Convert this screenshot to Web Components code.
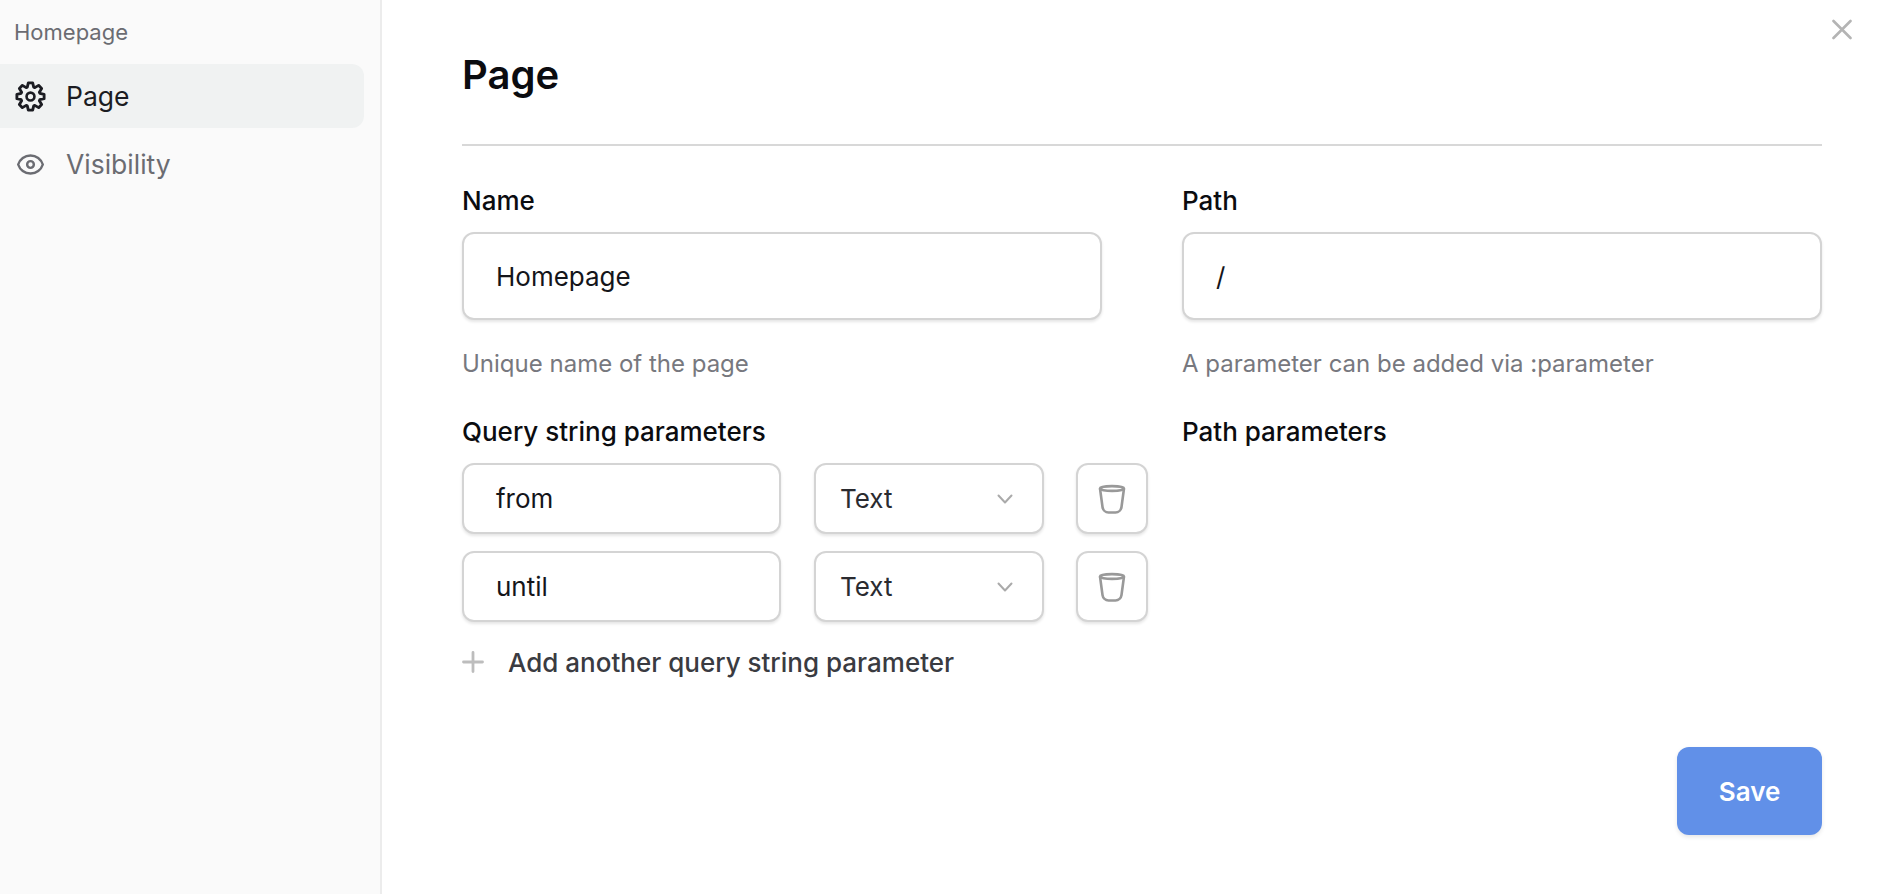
<!DOCTYPE html>
<html lang="en">
<head>
<meta charset="utf-8">
<title>Page settings</title>
<style>
  html, body { margin: 0; height: 100%; }
  body { font-family: Inter, "Liberation Sans", sans-serif; color: #0b0c10; background: #fff; overflow: hidden; }
</style>
</head>
<body>
<settings-dialog>
  <side-nav slot="nav" heading="Homepage">
    <nav-item active label="Page">
      <svg slot="icon" width="35" height="35" viewBox="-16 -16 32 32" fill="none" stroke="currentColor" stroke-width="2.6" stroke-linejoin="round" style="margin-left:1px"><path id="gear"/><circle r="3.6" stroke-width="2.4"/></svg>
    </nav-item>
    <nav-item label="Visibility">
      <svg slot="icon" width="31" height="31" viewBox="0 0 24 24" fill="none" stroke="currentColor" stroke-width="1.9" stroke-linecap="round" stroke-linejoin="round"><path d="M2.458 12C3.732 7.943 7.523 5 12 5c4.478 0 8.268 2.943 9.542 7-1.274 4.057-5.064 7-9.542 7-4.477 0-8.268-2.943-9.542-7z"/><circle cx="12" cy="12" r="2.6"/></svg>
    </nav-item>
  </side-nav>

  <page-form title-text="Page">
    <form-field label="Name" help="Unique name of the page"><text-input value="Homepage"></text-input></form-field>
    <form-field label="Path" help="A parameter can be added via :parameter"><text-input value="/"></text-input></form-field>
    <param-list label="Query string parameters" add-label="Add another query string parameter">
      <param-row name="from" type="Text"></param-row>
      <param-row name="until" type="Text"></param-row>
    </param-list>
    <param-list label="Path parameters"></param-list>
  </page-form>
</settings-dialog>

<script>
// small helper so every element gets an open shadow root from a string
const shadow = (el, html) => { el.attachShadow({mode: 'open'}).innerHTML = html; };

// eight-tooth cog outline, a tooth pointing straight up
const gear = [];
for (let k = 0; k < 8; k++) {
  const a = k * 45;
  for (const [deg, r] of [[-19, 9], [-9, 12.6], [9, 12.6], [19, 9]]) {
    const t = (a + deg - 90) * Math.PI / 180;
    gear.push((r * Math.cos(t)).toFixed(2) + ' ' + (r * Math.sin(t)).toFixed(2));
  }
}
document.getElementById('gear').setAttribute('d', 'M' + gear.join('L') + 'Z');

customElements.define('settings-dialog', class extends HTMLElement {
  constructor() {
    super();
    shadow(this, `
      <style>
        :host { display: flex; height: 894px; position: relative; }
        button { position: absolute; top: 19px; right: 38px; width: 20px; height: 21px; padding: 0; border: 0; background: none; color: #b4b4b4; }
        svg { display: block; }
      </style>
      <slot name="nav"></slot>
      <slot></slot>
      <button aria-label="Close"><svg width="20" height="21" viewBox="0 0 20 21" fill="none" stroke="currentColor" stroke-width="2.6" stroke-linecap="round"><path d="M1.5 2 18.5 19M18.5 2 1.5 19"/></svg></button>
    `);
  }
});

customElements.define('side-nav', class extends HTMLElement {
  constructor() {
    super();
    shadow(this, `
      <style>
        :host { display: block; box-sizing: border-box; width: 382px; flex: none; height: 100%; background: #fafafa; border-right: 2px solid #ececec; padding-right: 16px; }
        h2 { margin: 0; padding: 20px 0 0 14px; height: 44px; font-size: 22px; line-height: 24px; font-weight: 400; color: #6b6c72; }
        div { display: flex; flex-direction: column; gap: 4px; }
      </style>
      <h2></h2>
      <div><slot></slot></div>
    `);
    this.shadowRoot.querySelector('h2').textContent = this.getAttribute('heading');
  }
});

customElements.define('nav-item', class extends HTMLElement {
  constructor() {
    super();
    shadow(this, `
      <style>
        :host { display: flex; align-items: center; height: 64px; border-radius: 0 12px 12px 0; color: #6b6c72; font-size: 26.5px; }
        :host([active]) { background: #f0f2f2; color: #1b1c22; }
        .icon { width: 60px; height: 36px; flex: none; display: flex; align-items: center; justify-content: center; }
        .label { margin-left: 6px; }
      </style>
      <span class="icon"><slot name="icon"></slot></span>
      <span class="label"></span>
    `);
    this.shadowRoot.querySelector('.label').textContent = this.getAttribute('label');
  }
});

customElements.define('page-form', class extends HTMLElement {
  constructor() {
    super();
    shadow(this, `
      <style>
        :host { display: block; flex: 1; min-width: 0; padding: 0 68px 0 80px; }
        h1 { margin: 0; box-sizing: border-box; padding-top: 50px; font-size: 40px; line-height: 50px; font-weight: 600; border-bottom: 2px solid #d8d8d8; height: 146px; }
        .grid { display: grid; grid-template-columns: 640px 640px; column-gap: 80px; padding-top: 39px; }
        .actions { display: flex; justify-content: flex-end; }
        button { width: 145px; height: 88px; margin-top: 69px; border: 0; border-radius: 12px; background: #6190e8; color: #fff; font: 600 26px Inter, "Liberation Sans", sans-serif; box-shadow: 0 2px 4px rgba(0,0,0,.1); }
      </style>
      <h1></h1>
      <div class="grid"><slot></slot></div>
      <div class="actions"><button>Save</button></div>
    `);
    this.shadowRoot.querySelector('h1').textContent = this.getAttribute('title-text');
  }
});

customElements.define('form-field', class extends HTMLElement {
  constructor() {
    super();
    shadow(this, `
      <style>
        :host { display: block; }
        label { display: block; font-size: 26px; line-height: 32px; font-weight: 500; margin-bottom: 15px; }
        p { margin: 29px 0 0; font-size: 24px; line-height: 30px; color: #77787e; }
      </style>
      <label></label>
      <slot></slot>
      <p></p>
    `);
    this.shadowRoot.querySelector('label').textContent = this.getAttribute('label');
    this.shadowRoot.querySelector('p').textContent = this.getAttribute('help');
  }
});

const boxStyle = `
  box-sizing: border-box; background: #fff; border: 2px solid #d4d4d4; border-radius: 12px;
  box-shadow: 0 2px 3px rgba(0,0,0,.1);
`;

customElements.define('text-input', class extends HTMLElement {
  static get observedAttributes() { return ['value']; }
  constructor() {
    super();
    shadow(this, `
      <style>
        :host { display: flex; align-items: center; ${boxStyle} height: var(--input-height, 88px); width: var(--input-width, 100%); padding-left: 32px; font-size: 26px; color: #14151a; }
      </style>
      <span></span>
    `);
  }
  attributeChangedCallback(name, old, value) {
    this.shadowRoot.querySelector('span').textContent = value;
  }
});

customElements.define('param-list', class extends HTMLElement {
  constructor() {
    super();
    shadow(this, `
      <style>
        :host { display: block; margin-top: 37px; }
        h3 { margin: 0 0 15px; font-size: 26px; line-height: 32px; font-weight: 500; }
        .rows { display: flex; flex-direction: column; gap: 17px; }
        .add { display: flex; align-items: center; gap: 24px; margin-top: 24px; height: 32px; font-size: 26px; font-weight: 500; color: #3a3b41; }
        svg { display: block; }
      </style>
      <h3></h3>
      <div class="rows"><slot></slot></div>
    `);
    this.shadowRoot.querySelector('h3').textContent = this.getAttribute('label');
    const add = this.getAttribute('add-label');
    if (add) {
      const row = document.createElement('div');
      row.className = 'add';
      row.innerHTML = `<svg width="22" height="22" viewBox="0 0 22 22" fill="none" stroke="#bdbdbd" stroke-width="2.8" stroke-linecap="round"><path d="M11 1.500v19M1.500 11h19"/></svg><span></span>`;
      row.querySelector('span').textContent = add;
      this.shadowRoot.append(row);
    }
  }
});

customElements.define('param-row', class extends HTMLElement {
  constructor() {
    super();
    shadow(this, `
      <style>
        :host { display: flex; gap: 33px; width: 686px; --input-height: 71px; --input-width: 319px; }
        .select { ${boxStyle} display: flex; align-items: center; justify-content: space-between; width: 230px; height: 71px; margin-right: -1px; padding: 0 29px 0 24px; font-size: 26px; color: #2a2b30; }
        .del { ${boxStyle} display: flex; align-items: center; justify-content: center; width: 72px; height: 71px; padding: 0; color: #999; }
        svg { display: block; }
      </style>
      <text-input></text-input>
      <div class="select"><span class="type"></span>
        <svg width="16" height="10" viewBox="0 0 16 10" fill="none" stroke="#aaa" stroke-width="2" stroke-linecap="round" stroke-linejoin="round"><path d="M1.5 1.5 8 8.5l6.5-7"/></svg>
      </div>
      <button class="del" aria-label="Delete">
        <svg width="28" height="30" viewBox="0 0 28 30" fill="none" stroke="currentColor" stroke-width="2.6" stroke-linejoin="round"><ellipse cx="14" cy="4.500" rx="12" ry="2.400"/><path d="M2 4.500 4.500 23c.4 3 3 5.500 6 5.500h7c3 0 5.600-2.500 6-5.500L26 4.500"/></svg>
      </button>
    `);
    this.shadowRoot.querySelector('text-input').setAttribute('value', this.getAttribute('name'));
    this.shadowRoot.querySelector('.type').textContent = this.getAttribute('type');
  }
});
</script>
</body>
</html>
